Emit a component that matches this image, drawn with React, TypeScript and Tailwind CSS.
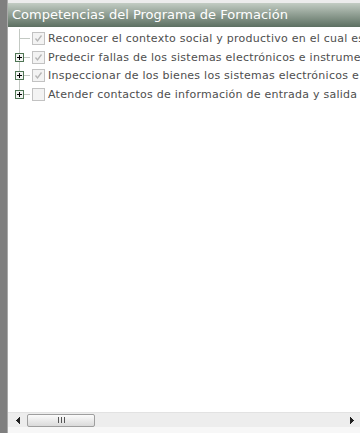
import React from "react";

type Row = { text: string; checked: boolean; expandable: boolean; h: number };

const rows: Row[] = [
  { text: "Reconocer el contexto social y productivo en el cual está inmerso", checked: true, expandable: false, h: 19 },
  { text: "Predecir fallas de los sistemas electrónicos e instrumentación", checked: true, expandable: true, h: 18 },
  { text: "Inspeccionar de los bienes los sistemas electrónicos e instrumentación", checked: true, expandable: true, h: 19 },
  { text: "Atender contactos de información de entrada y salida del cliente", checked: false, expandable: true, h: 18 },
];

function Gutter({ h, expandable, last }: { h: number; expandable: boolean; last: boolean }) {
  const c = Math.floor(h / 2);
  return (
    <svg width={24} height={h} className="shrink-0" shapeRendering="crispEdges">
      <line x1={11.5} y1={0} x2={11.5} y2={last ? c : h} stroke="#c3c9c3" strokeWidth={1} />
      <line x1={11} y1={c + 0.5} x2={22} y2={c + 0.5} stroke="#c3c9c3" strokeWidth={1} />
      {expandable && (
        <g>
          <rect x={7.5} y={c - 3.5} width={8} height={8} fill="#f2f4f2" stroke="#4f7554" strokeWidth={1} />
          <line x1={9} y1={c + 0.5} x2={14} y2={c + 0.5} stroke="#000" strokeWidth={1} />
          <line x1={11.5} y1={c - 2} x2={11.5} y2={c + 3} stroke="#000" strokeWidth={1} />
        </g>
      )}
    </svg>
  );
}

function Check({ checked }: { checked: boolean }) {
  return (
    <svg width={13} height={13} className="shrink-0" shapeRendering="crispEdges">
      <rect x={0.5} y={0.5} width={12} height={12} fill="#f3f3f3" stroke="#c2c2c2" />
      {checked && (
        <path d="M3.5 6.5 L5.5 9 L9.5 3.5" fill="none" stroke="#b5b5b5" strokeWidth={1.3} shapeRendering="geometricPrecision" />
      )}
    </svg>
  );
}

export default function App() {
  return (
    <div
      className="w-[360px] h-[433px] flex bg-white overflow-hidden"
      style={{ fontFamily: '"DejaVu Sans", Verdana, sans-serif' }}
    >
      <div className="w-[7px] shrink-0 bg-[#7f7f7f]" />
      <div className="w-px shrink-0 bg-[#a9a9a9]" />
      <div className="flex-1 min-w-0 flex flex-col">
        <div className="h-[3px] bg-[#ececec]" />
        <div className="h-[24px] shrink-0 flex items-center pl-[4px] text-white text-[13px] whitespace-nowrap bg-gradient-to-b from-[#c2ccc3] to-[#5d7062]">
          Competencias del Programa de Formación
        </div>
        <div className="flex-1 pt-[2px] overflow-hidden">
          {rows.map((r, i) => (
            <div key={i} className="flex items-center whitespace-nowrap" style={{ height: r.h }}>
              <Gutter h={r.h} expandable={r.expandable} last={i === rows.length - 1} />
              <Check checked={r.checked} />
              <span className="ml-[3px] text-[11px] tracking-[0.25px] text-[#4e4e4e] leading-none">{r.text}</span>
            </div>
          ))}
        </div>
        <div className="h-[15px] shrink-0 flex items-center bg-[#ededed] border-t border-[#e2e2e2]">
          <div className="w-[19px] h-full flex items-center justify-center">
            <svg width={4} height={7} shapeRendering="crispEdges">
              <path d="M4 0 L0 3.5 L4 7 Z" fill="#222" />
            </svg>
          </div>
          <div className="w-[68px] h-[13px] rounded-[2px] border border-[#9e9e9e] bg-gradient-to-b from-[#fbfbfb] to-[#dadada] flex items-center justify-center gap-[2px]">
            <div className="w-px h-[6px] bg-[#555]" />
            <div className="w-px h-[6px] bg-[#555]" />
            <div className="w-px h-[6px] bg-[#555]" />
          </div>
          <div className="flex-1" />
          <div className="w-[16px] h-full flex items-center justify-center">
            <svg width={4} height={7} shapeRendering="crispEdges">
              <path d="M0 0 L4 3.5 L0 7 Z" fill="#222" />
            </svg>
          </div>
        </div>
        <div className="h-[6px] shrink-0 bg-[#f7f7f7]" />
      </div>
    </div>
  );
}
